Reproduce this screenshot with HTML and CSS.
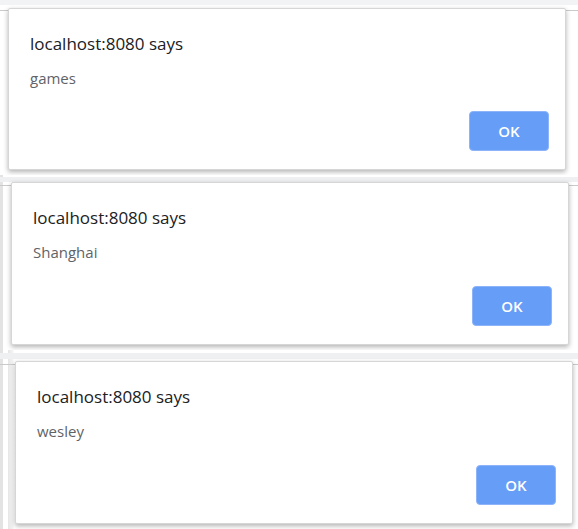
FILE: index.html
```html
<!DOCTYPE html>
<html>
<head>
<meta charset="utf-8">
<link rel="stylesheet" href="styles.css">
</head>
<body>
<div class="stack">
  <section class="shot shot-1">
    <div class="dialog">
      <h1 class="title">localhost:8080 says</h1>
      <p class="msg">games</p>
      <div class="actions"><button class="ok">OK</button></div>
    </div>
  </section>
  <section class="shot shot-2">
    <div class="dialog">
      <h1 class="title">localhost:8080 says</h1>
      <p class="msg">Shanghai</p>
      <div class="actions"><button class="ok">OK</button></div>
    </div>
  </section>
  <section class="shot shot-3">
    <div class="dialog">
      <h1 class="title">localhost:8080 says</h1>
      <p class="msg">wesley</p>
      <div class="actions"><button class="ok">OK</button></div>
    </div>
  </section>
</div>
</body>
</html>
```
FILE: styles.css
```css
html, body {
  margin: 0;
  padding: 0;
  background: #ffffff;
  width: 578px;
  height: 529px;
  overflow: hidden;
  font-family: "Open Sans", "Noto Sans", sans-serif;
}
.stack {
  display: flex;
  flex-direction: column;
}
.shot {
  display: flex;
  align-items: flex-start;
  box-sizing: border-box;
}
.shot-1 {
  height: 175px;
  padding: 8px 0 0 8px;
  background:
    linear-gradient(#c9cacb, #c9cacb) 0 10px / 100% 1px no-repeat,
    linear-gradient(#f1f3f4, #f1f3f4) 0 0 / 100% 5px no-repeat,
    #ffffff;
}
.shot-2 {
  height: 175px;
  padding: 7px 0 0 11px;
  background:
    linear-gradient(#c9cacb, #c9cacb) 0 10px / 100% 1px no-repeat,
    linear-gradient(#eef0f1, #eef0f1) 0 2px / 100% 5px no-repeat,
    linear-gradient(90deg, #e3e3e3 0, #e3e3e3 3px, #ffffff 3px) 0 0 / 100% 100% no-repeat;
}
.shot-3 {
  height: 179px;
  padding: 11px 0 0 15px;
  background:
    linear-gradient(#c9cacb, #c9cacb) 0 14px / 100% 1px no-repeat,
    linear-gradient(#eef0f1, #eef0f1) 0 3px / 100% 6px no-repeat,
    linear-gradient(90deg, #e3e3e3 0, #e3e3e3 3px, #ffffff 3px, #ffffff 8px, #e6e6e6 8px, #f4f4f4 13px, #ffffff 14px) 0 0 / 100% 100% no-repeat;
}
.dialog {
  box-sizing: border-box;
  width: 558px;
  background: #ffffff;
  border: 1px solid #d6d6d6;
  border-radius: 2px;
  box-shadow: 0 2px 5px rgba(0, 0, 0, 0.3);
  padding: 23px 16px 18px 21px;
  display: flex;
  flex-direction: column;
}
.shot-1 .dialog { height: 162px; }
.shot-2 .dialog { height: 163px; }
.shot-3 .dialog { height: 163px; }
.title {
  margin: 0;
  font-size: 17px;
  font-weight: 400;
  line-height: 24px;
  color: #202124;
}
.msg {
  margin: 12px 0 0 0;
  font-size: 15px;
  line-height: 20px;
  color: #5f6368;
}
.actions {
  margin-top: auto;
  display: flex;
  justify-content: flex-end;
}
.ok {
  width: 80px;
  height: 40px;
  box-sizing: border-box;
  border: 1px solid #8db4f9;
  border-radius: 4px;
  background: #669df6;
  color: #ffffff;
  font-family: "Open Sans", "Noto Sans", sans-serif;
  font-weight: 600;
  font-size: 15px;
  padding: 0;
}
```
